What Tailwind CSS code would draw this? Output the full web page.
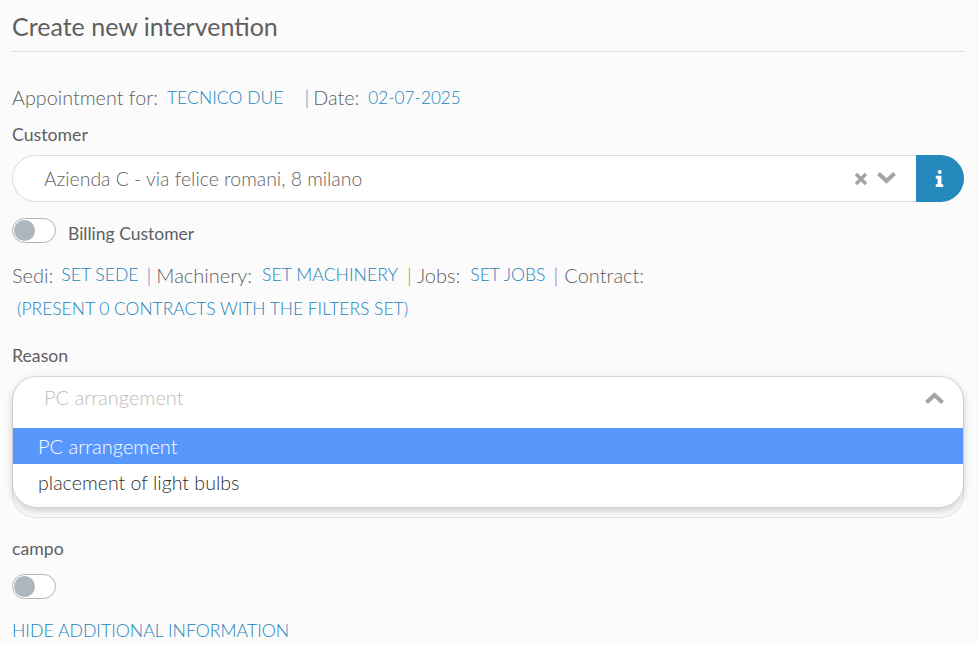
<!DOCTYPE html>
<html lang="en">
<head>
<meta charset="utf-8">
<title>Create new intervention</title>
<script src="https://cdn.jsdelivr.net/npm/@tailwindcss/browser@4"></script>
</head>
<body class="bg-[#fbfbfb] overflow-hidden font-['Lato',sans-serif] text-[#5f5f5f] w-[978px] h-[645px]">
<main class="pl-3 pr-[14px]">
  <h1 class="h-[52px] pt-[10px] text-[25px] leading-[32px] border-b border-[#ddd]">Create new intervention</h1>

  <p class="mt-[32px] h-[26px] flex items-center text-[19.8px] font-light leading-[26px] whitespace-pre">
    <span>Appointment for:</span><span class="ml-[9px] mt-[1px] text-[17.6px] text-[#1d84bc]">TECNICO DUE</span><span class="ml-[21px] text-[#2b9fd0]">|</span><span class="ml-[4px]">Date:</span><span class="ml-[9px] mt-[1px] text-[17.2px] text-[#1d84bc]">02-07-2025</span>
  </p>

  <label class="block mt-[15px] h-[20px] text-[17.7px] leading-[20px]">Customer</label>

  <div class="mt-[10px] flex h-[47px]">
    <div class="flex-1 flex items-center bg-white border border-[#ddd] border-r-0 rounded-l-[24px] pl-[31px] pr-[20px]">
      <span class="flex-1 text-[19.4px] font-light">Azienda C - via felice romani, 8 milano</span>
      <svg class="w-[14px] h-[14px]" viewBox="0 0 14 14" fill="none" stroke="#a3a3a3" stroke-width="3.400"><path d="M2 2 12 12M12 2 2 12"/></svg>
      <svg class="ml-[9px] w-[19px] h-[13px] -mt-[2px]" viewBox="0 0 19 13" fill="none" stroke="#a3a3a3" stroke-width="4"><path d="M1.500 2.500 9.500 10 17.500 2.500"/></svg>
    </div>
    <button class="w-[48px] bg-[#2589bd] rounded-r-[24px] flex items-center justify-center pr-[1px]">
      <svg class="w-[9px] h-[17px]" viewBox="0 0 8 16" fill="#fff"><circle cx="4.200" cy="1.900" r="1.900"/><path d="M.5 5.500H5.800V13.500H7.500V16H.5V13.500H2.200V8H.5Z"/></svg>
    </button>
  </div>

  <div class="mt-[15px] h-[26px] flex items-center">
    <span class="w-[44px] h-[25px] rounded-full border border-[#adb5bd] bg-white flex items-center pl-[1px]"><span class="w-[21px] h-[21px] rounded-full bg-[#adb5bd]"></span></span>
    <span class="ml-[12px] mt-[8px] text-[17.5px]">Billing Customer</span>
  </div>

  <p class="mt-[16px] h-[32px] flex items-center text-[20px] font-light whitespace-pre">
    <span>Sedi:</span><span class="ml-[8px] mt-[1px] text-[17.6px] text-[#1d84bc]">SET SEDE</span><span class="ml-[8px] text-[#2b9fd0]">|</span><span class="ml-[5px]">Machinery:</span><span class="ml-[10px] mt-[1px] text-[17.7px] text-[#1d84bc]">SET MACHINERY</span><span class="ml-[9px] text-[#b08d3a]">|</span><span class="ml-[5px]">Jobs:</span><span class="ml-[10px] mt-[1px] text-[17.6px] text-[#1d84bc]">SET JOBS</span><span class="ml-[8px] text-[#a05fa0]">|</span><span class="ml-[6px]">Contract:</span>
  </p>
  <p class="mt-[2px] h-[32px] pl-[5px] flex items-center text-[17.45px] font-light text-[#1d84bc] whitespace-pre">(PRESENT 0 CONTRACTS WITH THE FILTERS SET)</p>

  <label class="block mt-[21px] h-[20px] text-[17.7px] leading-[20px]">Reason</label>

  <div class="relative mt-[10px] h-[142px] border border-[#e2e2e2] rounded-[24px]">
    <ul class="absolute left-0 right-0 top-0 h-[130px] pt-[51px] bg-white rounded-[24px] shadow-[0_3px_9px_rgba(0,0,0,0.22)] text-[20px] font-light">
      <li class="h-[36px] flex items-center pl-[25px] bg-[#5897fb] text-white">PC arrangement</li>
      <li class="h-[36px] flex items-center pl-[25px] pt-[1px] text-[#2f2f2f] text-[19.6px]">placement of light bulbs</li>
    </ul>
    <div class="relative h-[43px] flex items-center pl-[31px] pr-[19px]">
      <span class="flex-1 -mt-[4px] text-[20px] font-light text-[#bbb]">PC arrangement</span>
      <svg class="w-[19px] h-[13px]" viewBox="0 0 19 13" fill="none" stroke="#a3a3a3" stroke-width="4"><path d="M1.500 10.500 9.500 3 17.500 10.500"/></svg>
    </div>
  </div>

  <label class="block mt-[21px] h-[20px] text-[17.7px] leading-[20px]">campo</label>

  <div class="mt-[14px] h-[26px] flex items-center">
    <span class="w-[44px] h-[25px] rounded-full border border-[#adb5bd] bg-white flex items-center pl-[1px]"><span class="w-[21px] h-[21px] rounded-full bg-[#adb5bd]"></span></span>
  </div>

  <p class="mt-[20px] text-[17.7px] font-light text-[#1d84bc] leading-[24px]">HIDE ADDITIONAL INFORMATION</p>
</main>
</body>
</html>
